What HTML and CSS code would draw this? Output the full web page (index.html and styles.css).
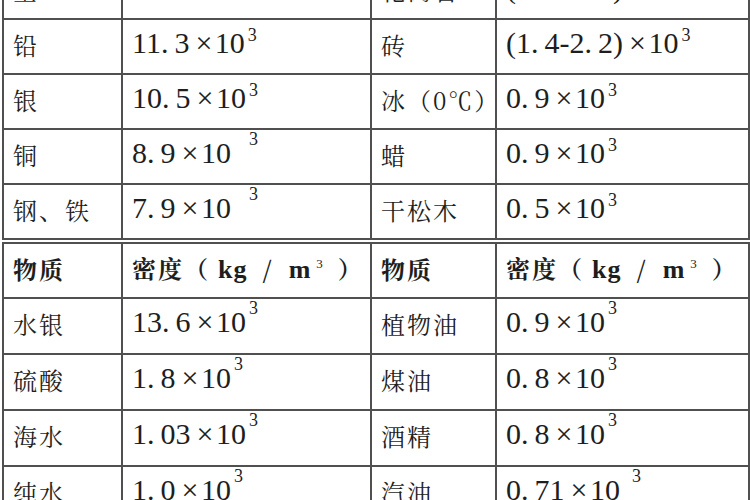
FILE: index.html
```html
<!DOCTYPE html>
<html lang="zh-CN">
<head>
<meta charset="utf-8">
<title>常见物质密度表</title>
<link rel="stylesheet" href="styles.css">
</head>
<body>
<div class="sheet">
  <table class="grid first">
    <colgroup><col class="c1"><col class="c2"><col class="c3"><col class="c4"></colgroup>
    <tr><td class="zh">金</td><td><span class="num">19.&#8201;3&#8201;×&#8202;10</span><sup class="e">3</sup></td><td class="zh">花岗岩</td><td><span class="num">(2.&#8201;6-2.&#8201;8)&#8201;×&#8202;10</span><sup class="e">3</sup></td></tr>
    <tr><td class="zh">铅</td><td><span class="num">11.&#8201;3&#8201;×&#8202;10</span><sup class="e">3</sup></td><td class="zh">砖</td><td><span class="num">(1.&#8201;4-2.&#8201;2)&#8201;×&#8202;10</span><sup class="e">3</sup></td></tr>
    <tr><td class="zh">银</td><td><span class="num">10.&#8201;5&#8201;×&#8202;10</span><sup class="e">3</sup></td><td class="zh">冰（0℃）</td><td><span class="num">0.&#8201;9&#8201;×&#8202;10</span><sup class="e">3</sup></td></tr>
    <tr><td class="zh">铜</td><td class="low"><span class="num">8.&#8201;9&#8201;×&#8202;10</span><sup class="e far">3</sup></td><td class="zh">蜡</td><td><span class="num">0.&#8201;9&#8201;×&#8202;10</span><sup class="e">3</sup></td></tr>
    <tr><td class="zh">钢、铁</td><td><span class="num">7.&#8201;9&#8201;×&#8202;10</span><sup class="e far">3</sup></td><td class="zh">干松木</td><td><span class="num">0.&#8201;5&#8201;×&#8202;10</span><sup class="e">3</sup></td></tr>
  </table>
  <table class="grid second">
    <colgroup><col class="c1"><col class="c2"><col class="c3"><col class="c4"></colgroup>
    <tr class="head"><td class="zh">物质</td><td class="zh">密度（ <span class="unit">kg</span> &#8201;/&#8201; <span class="unit">m</span><sup class="u3">3</sup> &#8201;）</td><td class="zh">物质</td><td class="zh">密度（ <span class="unit">kg</span> &#8201;/&#8201; <span class="unit">m</span><sup class="u3">3</sup> &#8201;）</td></tr>
    <tr><td class="zh">水银</td><td><span class="num">13.&#8201;6&#8201;×&#8202;10</span><sup class="e high">3</sup></td><td class="zh">植物油</td><td><span class="num">0.&#8201;9&#8201;×&#8202;10</span><sup class="e high">3</sup></td></tr>
    <tr><td class="zh">硫酸</td><td><span class="num">1.&#8201;8&#8201;×&#8202;10</span><sup class="e high">3</sup></td><td class="zh">煤油</td><td><span class="num">0.&#8201;8&#8201;×&#8202;10</span><sup class="e high">3</sup></td></tr>
    <tr><td class="zh">海水</td><td><span class="num">1.&#8201;03&#8201;×&#8202;10</span><sup class="e high">3</sup></td><td class="zh">酒精</td><td><span class="num">0.&#8201;8&#8201;×&#8202;10</span><sup class="e high">3</sup></td></tr>
    <tr><td class="zh">纯水</td><td><span class="num">1.&#8201;0&#8201;×&#8202;10</span><sup class="e high">3</sup></td><td class="zh">汽油</td><td><span class="num">0.&#8201;71&#8201;×&#8202;10</span><sup class="e high far2">3</sup></td></tr>
  </table>
</div>
</body>
</html>
```
FILE: styles.css
```css
html, body {
  margin: 0;
  padding: 0;
  background: #ffffff;
  overflow: hidden;
  width: 750px;
  height: 500px;
}

.sheet {
  margin-top: -37px;
  padding-left: 2px;
  color: #1e1e1e;
  font-family: "Noto Serif CJK SC", "Liberation Serif", "Noto Sans CJK SC", serif;
}

.grid {
  border-collapse: collapse;
  table-layout: fixed;
  width: 746px;
}

.grid td {
  border: 2px solid #505050;
  height: 49px;
  padding: 0 0 4px 9px;
  vertical-align: middle;
  white-space: nowrap;
  overflow: hidden;
  line-height: 30px;
}

.c1 { width: 119px; }
.c2 { width: 249px; }
.c3 { width: 125px; }
.c4 { width: 253px; }

.first {
  border-bottom: 2px solid #505050;
}

.second {
  margin-top: 2px;
}

.second tr:not(.head) td {
  height: 50px;
}

.zh {
  font-family: "Noto Serif CJK SC", "Noto Sans CJK SC", sans-serif;
  font-size: 24px;
  letter-spacing: 2px;
}

.num {
  font-family: "Liberation Serif", serif;
  font-size: 30px;
  letter-spacing: 0;
}

.e {
  font-family: "Liberation Serif", serif;
  font-size: 18px;
  vertical-align: 12px;
  line-height: 0;
  margin-left: 3px;
  letter-spacing: 0;
}

.e.far {
  margin-left: 18px;
  vertical-align: 18px;
}

.e.high {
  vertical-align: 18px;
}

.e.far2 {
  margin-left: 12px;
}

.low {
  padding-top: 8px;
}

.head td {
  font-weight: 700;
}

.unit {
  font-family: "Liberation Serif", serif;
  font-size: 26px;
  font-weight: 700;
  letter-spacing: 1px;
}

.u3 {
  font-family: "Liberation Serif", serif;
  font-size: 13px;
  font-weight: 400;
  vertical-align: 10px;
  line-height: 0;
  margin-left: 5px;
  letter-spacing: 0;
}
```
